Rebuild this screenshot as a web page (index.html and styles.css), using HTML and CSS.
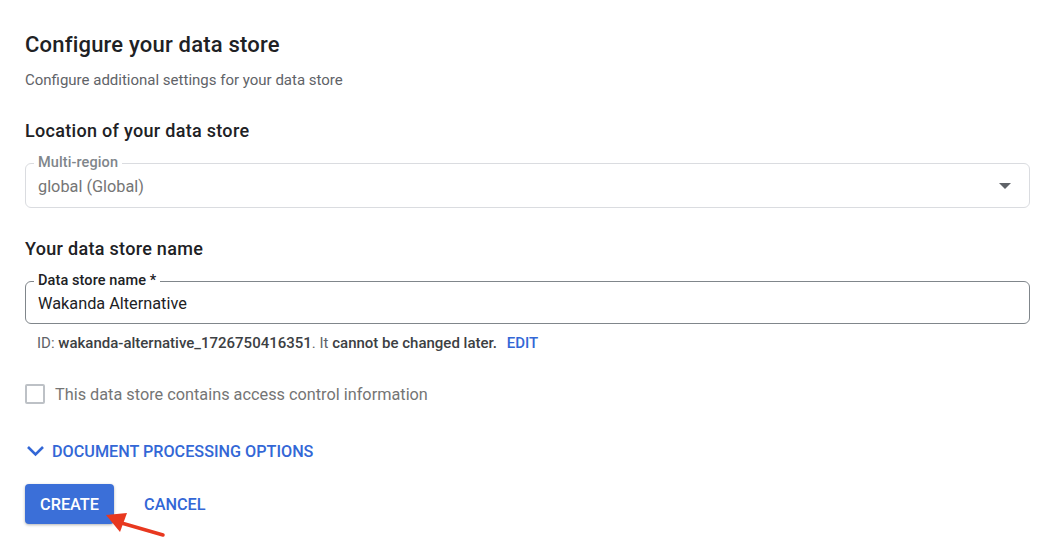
FILE: index.html
```html
<!DOCTYPE html>
<html lang="en">
<head>
    <meta charset="UTF-8">
    <title>Configure your data store</title>
    <link rel="stylesheet" href="styles.css">
</head>
<body>
    <div class="page">
        <h1 class="title">Configure your data store</h1>
        <p class="subtitle">Configure additional settings for your data store</p>

        <h2 class="section">Location of your data store</h2>
        <div class="field disabled">
            <span class="field-label">Multi-region</span>
            <span class="field-value">global (Global)</span>
            <span class="caret"></span>
        </div>

        <h2 class="section">Your data store name</h2>
        <div class="field active">
            <span class="field-label">Data store name *</span>
            <span class="field-value">Wakanda Alternative</span>
        </div>
        <p class="hint">ID: <b>wakanda-alternative_1726750416351</b>. It <b>cannot be changed later.</b> <a class="link">EDIT</a></p>

        <label class="check">
            <span class="box"></span>
            This data store contains access control information
        </label>

        <div class="expander">
            <svg width="19" height="12" viewBox="0 0 19 12"><polyline points="2,2 9.5,9.5 17,2" fill="none" stroke="#3367d6" stroke-width="2.6"/></svg>
            DOCUMENT PROCESSING OPTIONS
        </div>

        <div class="actions">
            <button class="btn primary">CREATE</button>
            <button class="btn flat">CANCEL</button>
            <!-- annotation arrow on top of the screenshot -->
            <svg class="arrow" width="70" height="35" viewBox="0 0 70 35">
                <line x1="63" y1="25" x2="18" y2="12" stroke="#e8381f" stroke-width="3.5" stroke-linecap="round"/>
                <polygon points="6,5 27,3 20,22" fill="#e8381f"/>
            </svg>
        </div>
    </div>
</body>
</html>
```

FILE: styles.css
```css
body {
    margin: 0;
    min-height: 100vh;
    background: #fff;
    font-family: Roboto, "Liberation Sans", Arial, sans-serif;
    color: #202124;
}

.page {
    padding: 30px 9px 29px 25px;
}

.title {
    margin: 0;
    font-size: 22px;
    font-weight: 500;
    letter-spacing: 0.2px;
    line-height: 30px;
}

.subtitle {
    margin: 10px 0 0;
    font-size: 15px;
    color: #5f6368;
    line-height: 20px;
}

.section {
    margin: 30px 0 0;
    font-size: 18px;
    font-weight: 500;
    letter-spacing: 0.3px;
    line-height: 22px;
}

.field {
    position: relative;
    margin-top: 21px;
    height: 43px;
    border: 1px solid #dadce0;
    border-radius: 6px;
    display: flex;
    align-items: center;
    padding: 0 12px;
}
.field.active {
    height: 41px;
    border-color: #80868b;
}
.field-label {
    position: absolute;
    top: -10px;
    left: 8px;
    padding: 0 4px;
    background: #fff;
    font-size: 14.5px;
    font-weight: 500;
    letter-spacing: 0.1px;
    line-height: 18px;
    color: #202124;
}
.disabled .field-label {
    color: #80868b;
}
.field-value {
    font-size: 16.3px;
    padding-top: 2px;
}
.disabled .field-value {
    color: #757575;
}
.caret {
    margin-left: auto;
    margin-right: 6px;
    border-left: 6px solid transparent;
    border-right: 6px solid transparent;
    border-top: 6px solid #5f6368;
}

.hint {
    margin: 9px 0 0 12px;
    font-size: 15px;
    line-height: 20px;
    color: #5f6368;
}
.hint b {
    font-weight: 500;
    color: #3c4043;
}
.link {
    margin-left: 6px;
    color: #3367d6;
    font-weight: 500;
}

.check {
    display: flex;
    align-items: center;
    gap: 10px;
    margin-top: 31px;
    font-size: 16.3px;
    color: #757575;
}
.box {
    width: 16px;
    height: 16px;
    border: 2px solid #bdc1c6;
    border-radius: 2px;
}

.expander {
    display: flex;
    align-items: center;
    gap: 7px;
    height: 20px;
    margin-top: 37px;
    margin-left: 1px;
    font-size: 16.2px;
    font-weight: 500;
    color: #3367d6;
}

.actions {
    position: relative;
    display: flex;
    align-items: center;
    gap: 15px;
    margin-top: 23px;
}
.btn {
    font-family: inherit;
    font-size: 16.3px;
    font-weight: 500;
    border: none;
    border-radius: 4px;
    height: 40px;
    padding: 0 15px;
    cursor: pointer;
}
.primary {
    background: #3b6fd8;
    color: #fff;
    box-shadow: 0 1px 3px rgba(0, 0, 0, 0.3);
}
.flat {
    background: none;
    color: #3367d6;
}
.arrow {
    position: absolute;
    left: 75px;
    top: 26px;
}
```
